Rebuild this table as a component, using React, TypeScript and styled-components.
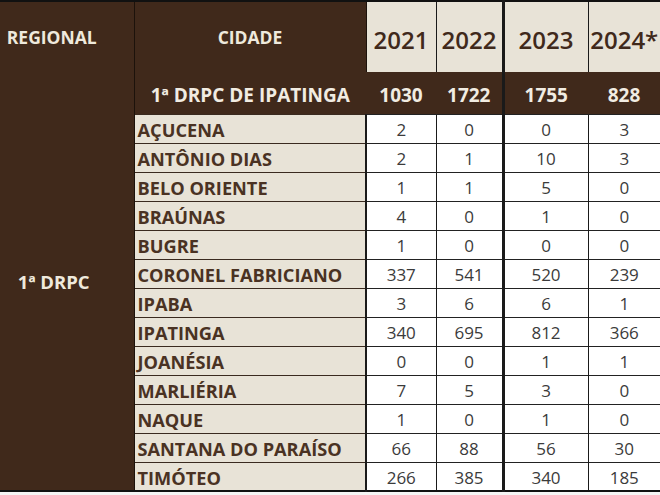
import styled, { createGlobalStyle } from 'styled-components';

const GlobalStyle = createGlobalStyle`
  html, body {
    margin: 0;
    padding: 0;
    background: #f5f5f4;
  }
  body {
    font-family: "Open Sans", "Noto Sans", sans-serif;
  }
`;

const BROWN = '#40291b';
const BEIGE = '#e8e3d7';

const Sheet = styled.table`
  width: 660px;
  border-collapse: collapse;
  table-layout: fixed;
  background: #fff;
  border-top: 2px solid #111;
  border-bottom: 2px solid #111;
`;

const Col = styled.col<{ $w: number }>`
  width: ${({ $w }) => $w}px;
`;

const LabelHead = styled.th<{ $shift?: number }>`
  height: 70px;
  padding: 0 ${({ $shift }) => $shift ?? 0}px 0 0;
  background: ${BROWN};
  color: #efe9dd;
  font-size: 17.5px;
  font-weight: 700;
  text-align: center;
  border-right: 1px solid #1c120b;
`;

const YearHead = styled.th<{ $thick?: boolean }>`
  background: ${BEIGE};
  color: ${BROWN};
  font-size: 24px;
  font-weight: 600;
  text-align: center;
  padding: 4px 0 0;
  border-left: ${({ $thick }) => ($thick ? '3px' : '1px')} solid #1a1a1a;
`;

const RegionalCell = styled.td`
  background: ${BROWN};
  color: #efe9dd;
  font-size: 18.5px;
  font-weight: 700;
  text-align: center;
  padding: 0 26px 0 0;
  border-right: 1px solid #1c120b;
`;

const TotalRow = styled.tr`
  height: 42px;
  background: ${BROWN};
`;

const TotalCell = styled.td<{ $thick?: boolean }>`
  color: #f1ece2;
  font-size: 19px;
  font-weight: 700;
  text-align: center;
  padding: 4px 0 0;
  white-space: nowrap;
  border-left: ${({ $thick }) => ($thick ? '3px' : '0px')} solid #1a1a1a;
`;

const DataRow = styled.tr`
  height: 29px;
`;

const CityCell = styled.td`
  background: ${BEIGE};
  color: #4a3223;
  font-size: 18.2px;
  font-weight: 700;
  padding: 3px 0 0 3px;
  line-height: 24px;
  white-space: nowrap;
  overflow: hidden;
  border-top: 1px solid #3a2a1f;
  border-right: 2px solid #1a1a1a;
`;

const NumCell = styled.td<{ $thick?: boolean }>`
  color: #3b3b3b;
  font-size: 17px;
  line-height: 24px;
  text-align: center;
  padding: 3px 0 0;
  border-top: 1px solid #222;
  border-left: ${({ $thick }) => ($thick ? '3px' : '1px')} solid #1a1a1a;
`;

const widths = [134, 232, 70, 67, 85, 72];
const years = ['2021', '2022', '2023', '2024*'];
const totals = [1030, 1722, 1755, 828];

const cities: [string, number[]][] = [
  ['AÇUCENA', [2, 0, 0, 3]],
  ['ANTÔNIO DIAS', [2, 1, 10, 3]],
  ['BELO ORIENTE', [1, 1, 5, 0]],
  ['BRAÚNAS', [4, 0, 1, 0]],
  ['BUGRE', [1, 0, 0, 0]],
  ['CORONEL FABRICIANO', [337, 541, 520, 239]],
  ['IPABA', [3, 6, 6, 1]],
  ['IPATINGA', [340, 695, 812, 366]],
  ['JOANÉSIA', [0, 0, 1, 1]],
  ['MARLIÉRIA', [7, 5, 3, 0]],
  ['NAQUE', [1, 0, 1, 0]],
  ['SANTANA DO PARAÍSO', [66, 88, 56, 30]],
  ['TIMÓTEO', [266, 385, 340, 185]],
];

export default function App() {
  return (
    <>
      <GlobalStyle />
      <Sheet>
        <colgroup>
          {widths.map((w, i) => (
            <Col key={i} $w={w} />
          ))}
        </colgroup>
        <thead>
          <tr>
            <LabelHead $shift={30}>REGIONAL</LabelHead>
            <LabelHead>CIDADE</LabelHead>
            {years.map((y, i) => (
              <YearHead key={y} $thick={i === 2}>{y}</YearHead>
            ))}
          </tr>
        </thead>
        <tbody>
          <TotalRow>
            <RegionalCell rowSpan={cities.length + 1}>1ª DRPC</RegionalCell>
            <TotalCell>1ª DRPC DE IPATINGA</TotalCell>
            {totals.map((t, i) => (
              <TotalCell key={i} $thick={i === 2}>{t}</TotalCell>
            ))}
          </TotalRow>
          {cities.map(([name, vals]) => (
            <DataRow key={name}>
              <CityCell>{name}</CityCell>
              {vals.map((v, i) => (
                <NumCell key={i} $thick={i === 2}>{v}</NumCell>
              ))}
            </DataRow>
          ))}
        </tbody>
      </Sheet>
    </>
  );
}
